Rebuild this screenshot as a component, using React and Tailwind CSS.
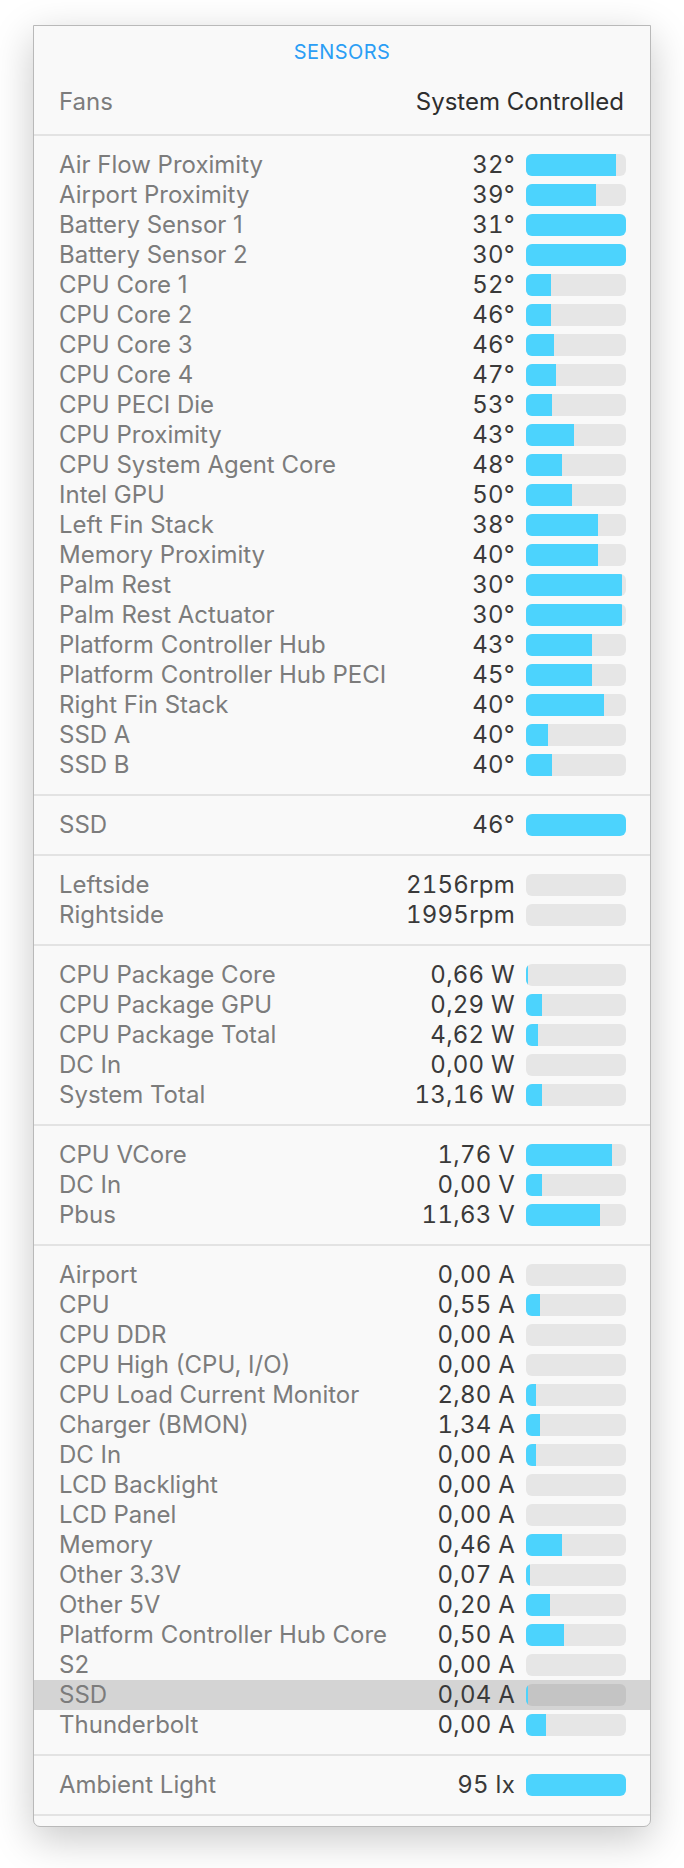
const temperatures = [
  ["Air Flow Proximity", "32°", 90],
  ["Airport Proximity", "39°", 70],
  ["Battery Sensor 1", "31°", 100],
  ["Battery Sensor 2", "30°", 100],
  ["CPU Core 1", "52°", 25],
  ["CPU Core 2", "46°", 25],
  ["CPU Core 3", "46°", 28],
  ["CPU Core 4", "47°", 30],
  ["CPU PECI Die", "53°", 26],
  ["CPU Proximity", "43°", 48],
  ["CPU System Agent Core", "48°", 36],
  ["Intel GPU", "50°", 46],
  ["Left Fin Stack", "38°", 72],
  ["Memory Proximity", "40°", 72],
  ["Palm Rest", "30°", 96],
  ["Palm Rest Actuator", "30°", 96],
  ["Platform Controller Hub", "43°", 66],
  ["Platform Controller Hub PECI", "45°", 66],
  ["Right Fin Stack", "40°", 78],
  ["SSD A", "40°", 22],
  ["SSD B", "40°", 26],
];

const disks = [["SSD", "46°", 100]];

const fans = [
  ["Leftside", "2156rpm", 0],
  ["Rightside", "1995rpm", 0],
];

const power = [
  ["CPU Package Core", "0,66 W", 2],
  ["CPU Package GPU", "0,29 W", 16],
  ["CPU Package Total", "4,62 W", 12],
  ["DC In", "0,00 W", 0],
  ["System Total", "13,16 W", 16],
];

const voltages = [
  ["CPU VCore", "1,76 V", 86],
  ["DC In", "0,00 V", 16],
  ["Pbus", "11,63 V", 74],
];

const currents = [
  ["Airport", "0,00 A", 0],
  ["CPU", "0,55 A", 14],
  ["CPU DDR", "0,00 A", 0],
  ["CPU High (CPU, I/O)", "0,00 A", 0],
  ["CPU Load Current Monitor", "2,80 A", 10],
  ["Charger (BMON)", "1,34 A", 14],
  ["DC In", "0,00 A", 10],
  ["LCD Backlight", "0,00 A", 0],
  ["LCD Panel", "0,00 A", 0],
  ["Memory", "0,46 A", 36],
  ["Other 3.3V", "0,07 A", 4],
  ["Other 5V", "0,20 A", 24],
  ["Platform Controller Hub Core", "0,50 A", 38],
  ["S2", "0,00 A", 0],
  ["SSD", "0,04 A", 2, true],
  ["Thunderbolt", "0,00 A", 20],
];

const light = [["Ambient Light", "95 lx", 100]];

const sections = [temperatures, disks, fans, power, voltages, currents, light];

function SensorRow({ label, value, level, selected }) {
  return (
    <div
      className={`flex h-[30px] items-center pl-[25px] pr-[24px] ${selected ? "bg-[#d4d4d4]" : ""}`}
    >
      <span className="flex-1 truncate text-[#7c7c7c]">{label}</span>
      <span className="tabular-nums tracking-[0.01em] text-[#3a3a3a]">{value}</span>
      <div
        className={`ml-[11px] h-[22px] w-[100px] shrink-0 overflow-hidden rounded-[6px] ${selected ? "bg-[#c4c4c4]" : "bg-[#e6e6e6]"}`}
      >
        <div className="h-full bg-[#4cd3fd]" style={{ width: `${level}%` }} />
      </div>
    </div>
  );
}

function Divider() {
  return <div className="h-[2px] bg-[#e3e3e3]" />;
}

export default function App() {
  return (
    <div className="min-h-[1868px] bg-white pt-[25px] font-['Inter',sans-serif] text-[24px] leading-[30px]">
      <div className="mx-auto w-[618px] rounded-b-[7px] border border-[#b9b9b9] bg-[#f9f9f9] pb-[10px] shadow-[0_12px_40px_rgba(0,0,0,0.22)]">
        <div className="flex h-[52px] items-center justify-center text-[20px] tracking-[0.02em] text-[#2b9ef5]">
          SENSORS
        </div>
        <div className="flex h-[48px] items-center justify-between pl-[25px] pr-[26px]">
          <span className="text-[#7c7c7c]">Fans</span>
          <span className="text-[#2e2e2e]">System Controlled</span>
        </div>
        <div className="h-[8px]" />
        <Divider />
        {sections.map((rows, i) => (
          <div key={i}>
            <div className="py-[14px]">
              {rows.map(([label, value, level, selected], j) => (
                <SensorRow key={j} label={label} value={value} level={level} selected={selected} />
              ))}
            </div>
            <Divider />
          </div>
        ))}
      </div>
    </div>
  );
}
